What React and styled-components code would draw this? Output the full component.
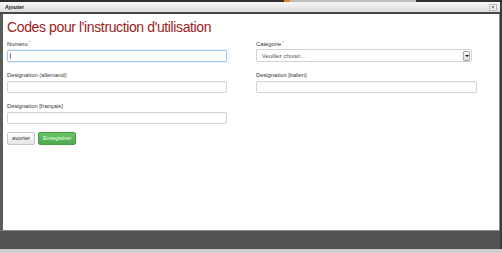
import styled, { createGlobalStyle } from "styled-components";

const GlobalStyle = createGlobalStyle`
  html, body { margin: 0; padding: 0; }
  body {
    width: 502px;
    height: 253px;
    overflow: hidden;
    background: #3a3a3a;
    font-family: "Liberation Sans", Arial, sans-serif;
  }
`;

const Page = styled.div`
  width: 502px;
  height: 253px;
  display: flex;
  flex-direction: column;
  background: #3b3b3b;
`;

const TopStrip = styled.div`
  height: 2px;
  display: flex;
  flex-shrink: 0;
  background: #2f2f2f;
`;

const StripBit = styled.span`
  width: ${(p) => p.$w}px;
  background: ${(p) => p.$c};
`;

const Dialog = styled.div`
  width: 500px;
  flex: 1;
  display: flex;
  flex-direction: column;
`;

const TitleBar = styled.div`
  height: 10px;
  flex-shrink: 0;
  display: flex;
  align-items: center;
  justify-content: space-between;
  padding: 0 3px 0 5px;
  background: linear-gradient(#f7f7f7, #dddddd);
  border-bottom: 2px solid #474747;
  font-size: 5.5px;
  font-weight: bold;
  color: #222;
`;

const CloseBtn = styled.span`
  width: 6px;
  height: 5px;
  border: 1px solid #b8b8b8;
  background: #f2f2f2;
  display: flex;
  align-items: center;
  justify-content: center;
  font-size: 5px;
  line-height: 1;
  color: #444;
`;

const Body = styled.div`
  flex: 1;
  background: #fff;
  border-left: 3px solid #5b5b5b;
  border-right: 1px solid #8a8a8a;
  border-bottom: 1px solid #8a8a8a;
  padding: 5px 0 0 4px;
  font-size: 5.8px;
  line-height: 8px;
`;

const Title = styled.h1`
  margin: 0 0 5px;
  font-size: 14px;
  line-height: 16px;
  font-weight: normal;
  letter-spacing: -0.38px;
  color: #9e1b1b;
`;

const FormGrid = styled.div`
  display: grid;
  grid-template-columns: 220px 221px;
  column-gap: 29px;
  row-gap: 9px;
`;

const Field = styled.div`
  display: flex;
  flex-direction: column;
`;

const Label = styled.label`
  display: block;
  height: 8px;
  font-size: 5.8px;
  line-height: 8px;
  color: #333;
  margin-bottom: 2px;
  sup {
    position: relative;
    top: -2px;
    font-size: 4px;
    line-height: 0;
    vertical-align: baseline;
    margin-left: 1px;
  }
`;

const InputWrap = styled.div`
  position: relative;
  height: 12px;
`;

const Input = styled.input`
  display: block;
  box-sizing: border-box;
  width: 100%;
  height: 12px;
  margin: 0;
  padding: 0 3px;
  font: inherit;
  font-size: 5.8px;
  border: 1px solid ${(p) => (p.$focused ? "#a3c5e6" : "#d3d3d3")};
  border-radius: 2px;
  background: #fff;
  box-shadow: ${(p) =>
    p.$focused
      ? "0 0 2px rgba(82, 168, 236, 0.45)"
      : "inset 0 1px 1px rgba(0, 0, 0, 0.04)"};
  outline: none;
`;

const Caret = styled.span`
  position: absolute;
  left: 3px;
  top: 3px;
  width: 1px;
  height: 6px;
  background: #777;
`;

const Select = styled.div`
  box-sizing: border-box;
  width: 216px;
  height: 13px;
  margin-top: -1px;
  display: flex;
  align-items: center;
  justify-content: space-between;
  padding: 0 1px 0 5px;
  border: 1px solid #d3d3d3;
  border-radius: 2px;
  font-size: 5.8px;
  color: #555;
`;

const SelectArrow = styled.span`
  box-sizing: border-box;
  width: 7px;
  height: 10px;
  display: flex;
  align-items: center;
  justify-content: center;
  border: 1px solid #a9a9a9;
  border-radius: 1px;
  background: linear-gradient(#fafafa, #dcdcdc);
  &::after {
    content: "";
    border-left: 2px solid transparent;
    border-right: 2px solid transparent;
    border-top: 2px solid #111;
  }
`;

const Actions = styled.div`
  display: flex;
  gap: 3px;
  margin-top: 8px;
`;

const Button = styled.button`
  height: 13px;
  margin: 0;
  padding: 0 4px;
  font-family: inherit;
  font-size: 5.8px;
  line-height: 1;
  border-radius: 2px;
  border: 1px solid ${(p) => (p.$primary ? "#4a9b4a" : "#c6c6c6")};
  background: ${(p) =>
    p.$primary
      ? "linear-gradient(#66c466, #4fa84f)"
      : "linear-gradient(#ffffff, #e4e4e4)"};
  color: ${(p) => (p.$primary ? "#eaffea" : "#333")};
`;

const Footer = styled.div`
  height: 18px;
  flex-shrink: 0;
  background: #535353;
`;

const BottomStrip = styled.div`
  height: 4px;
  flex-shrink: 0;
  background: #cdcdcd;
`;

const TextField = ({ label, required, focused }) => (
  <Field>
    <Label>
      {label}
      {required && <sup>*</sup>}
    </Label>
    <InputWrap>
      <Input type="text" readOnly $focused={focused} />
      {focused && <Caret />}
    </InputWrap>
  </Field>
);

export default function App() {
  return (
    <Page>
      <GlobalStyle />
      <TopStrip>
        <StripBit $w={284} $c="#2f2f2f" />
        <StripBit $w={6} $c="#e8871e" />
        <StripBit $w={126} $c="#bdbdbd" />
      </TopStrip>
      <Dialog>
        <TitleBar>
          <span>Ajouter</span>
          <CloseBtn>×</CloseBtn>
        </TitleBar>
        <Body>
          <Title>Codes pour l'instruction d'utilisation</Title>
          <FormGrid>
            <TextField label="Numéro" required focused />
            <Field>
              <Label>
                Catégorie<sup>*</sup>
              </Label>
              <Select>
                <span>Veuillez choisir...</span>
                <SelectArrow />
              </Select>
            </Field>
            <TextField label="Designation (allemand)" />
            <TextField label="Designation [italien]" />
            <TextField label="Designation [français]" />
          </FormGrid>
          <Actions>
            <Button>avorter</Button>
            <Button $primary>Enregistrer</Button>
          </Actions>
        </Body>
        <Footer />
      </Dialog>
      <BottomStrip />
    </Page>
  );
}
